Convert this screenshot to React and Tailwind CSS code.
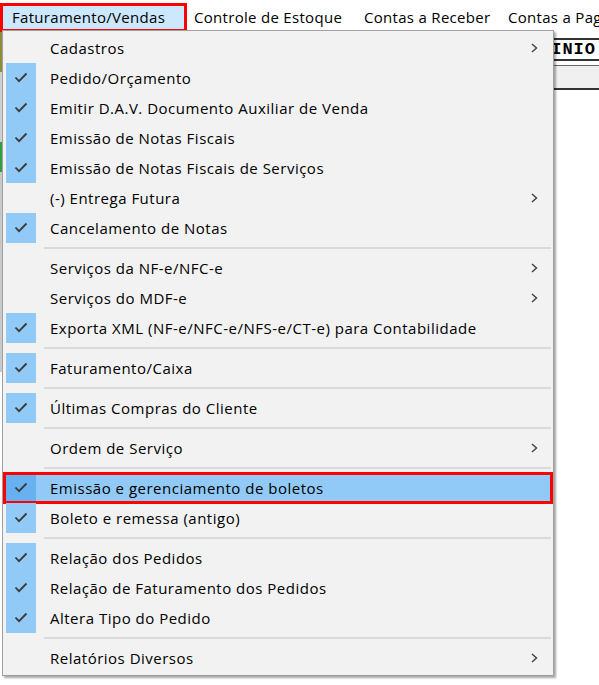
import React from "react";

const items = [
  { t: "Cadastros", sub: true },
  { t: "Pedido/Orçamento", c: true },
  { t: "Emitir D.A.V. Documento Auxiliar de Venda", c: true },
  { t: "Emissão de Notas Fiscais", c: true },
  { t: "Emissão de Notas Fiscais de Serviços", c: true },
  { t: "(-) Entrega Futura", sub: true },
  { t: "Cancelamento de Notas", c: true },
  { sep: true },
  { t: "Serviços da NF-e/NFC-e", sub: true },
  { t: "Serviços do MDF-e", sub: true },
  { t: "Exporta XML (NF-e/NFC-e/NFS-e/CT-e) para Contabilidade", c: true },
  { sep: true },
  { t: "Faturamento/Caixa", c: true },
  { sep: true },
  { t: "Últimas Compras do Cliente", c: true },
  { sep: true },
  { t: "Ordem de Serviço", sub: true },
  { sep: true },
  { t: "Emissão e gerenciamento de boletos", c: true, hl: true },
  { t: "Boleto e remessa (antigo)", c: true },
  { sep: true },
  { t: "Relação dos Pedidos", c: true },
  { t: "Relação de Faturamento dos Pedidos", c: true },
  { t: "Altera Tipo do Pedido", c: true },
  { sep: true },
  { t: "Relatórios Diversos", sub: true },
];

function Check() {
  return (
    <svg width="14" height="12" viewBox="0 0 14 12" fill="none">
      <path d="M1.5 5.5 L5 9.2 L12.5 1.5" stroke="#3a3a3a" strokeWidth="1.8" />
    </svg>
  );
}

function Chevron() {
  return (
    <svg width="7" height="10" viewBox="0 0 7 10" fill="none">
      <path d="M1 1 L5.5 5 L1 9" stroke="#444" strokeWidth="1.5" />
    </svg>
  );
}

function Row({ it }) {
  if (it.sep) {
    return (
      <div className="h-[10px] flex items-center pl-[41px] pr-[2px]">
        <div className="h-[2px] w-full bg-[#dadada]" />
      </div>
    );
  }
  return (
    <div
      className={
        "relative h-[30px] flex items-center " + (it.hl ? "bg-[#91c9f7]" : "")
      }
    >
      <div
        className={
          "ml-[3px] w-[30px] h-[30px] shrink-0 flex items-center justify-center " +
          (it.c ? (it.hl ? "bg-[#68b1f0]" : "bg-[#91c9f7]") : "")
        }
      >
        {it.c && <Check />}
      </div>
      <span className="ml-[14px] text-[15px] tracking-[0.5px] text-black leading-none whitespace-nowrap">
        {it.t}
      </span>
      {it.sub && (
        <span className="absolute left-[528px] top-[10px] flex">
          <Chevron />
        </span>
      )}
      {it.hl && (
        <span className="absolute left-0 right-0 -top-[1px] -bottom-[1px] border-[3px] border-[#ff0000]" />
      )}
    </div>
  );
}

export default function App() {
  return (
    <div
      className="relative w-[599px] h-[685px] bg-white overflow-hidden"
      style={{ fontFamily: '"Open Sans", "Noto Sans", sans-serif' }}
    >
      {/* menu bar */}
      <div className="h-[32px] flex items-start text-[15px] tracking-[0.3px] text-black whitespace-nowrap">
        <div className="mt-[3px] shrink-0 w-[187px] h-[29px] border-[3px] border-[#ff0000] bg-[#cce8ff] flex items-center pl-[9px] pb-[1px]">
          Faturamento/Vendas
        </div>
        <div className="shrink-0 w-[170px] h-[32px] flex items-center pl-[7px] pt-[2px]">Controle de Estoque</div>
        <div className="shrink-0 w-[144px] h-[32px] flex items-center pl-[7px] pt-[2px]">Contas a Receber</div>
        <div className="shrink-0 h-[32px] flex items-center pl-[7px] pt-[2px]">Contas a Pagar</div>
      </div>

      {/* app behind */}
      <div className="flex">
        <div className="w-[2px] flex flex-col">
          <div className="h-[40px] bg-[#8c8c3c]" />
          <div className="h-[70px] bg-[#d0d0d0]" />
          <div className="h-[30px] bg-[#2ea043]" />
          <div className="h-[200px] bg-[#c8c8c8]" />
        </div>
        <div className="flex-1 flex justify-end">
          <div className="w-[60px] mt-[6px] flex flex-col">
            <div className="h-[2px] bg-[#333]" />
            <div
              className="h-[19px] flex items-center pl-[1px] font-bold text-[17px] tracking-[1px]"
              style={{ fontFamily: '"Liberation Mono", monospace' }}
            >
              MINIO
            </div>
            <div className="h-[2px] bg-[#333]" />
            <div className="h-[4px] bg-white" />
            <div className="h-[1px] bg-[#666]" />
            <div className="h-[22px] bg-[#f0f0f0]" />
            <div className="h-[2px] bg-[#333]" />
          </div>
        </div>
      </div>

      {/* dropdown */}
      <div className="absolute left-[2px] top-[30px] w-[552px] bg-[#f2f2f2] border border-[#a0a0a0] py-[2px] shadow-[2px_2px_2px_rgba(0,0,0,0.35)]">
        {items.map((it, i) => (
          <Row key={i} it={it} />
        ))}
      </div>
    </div>
  );
}
